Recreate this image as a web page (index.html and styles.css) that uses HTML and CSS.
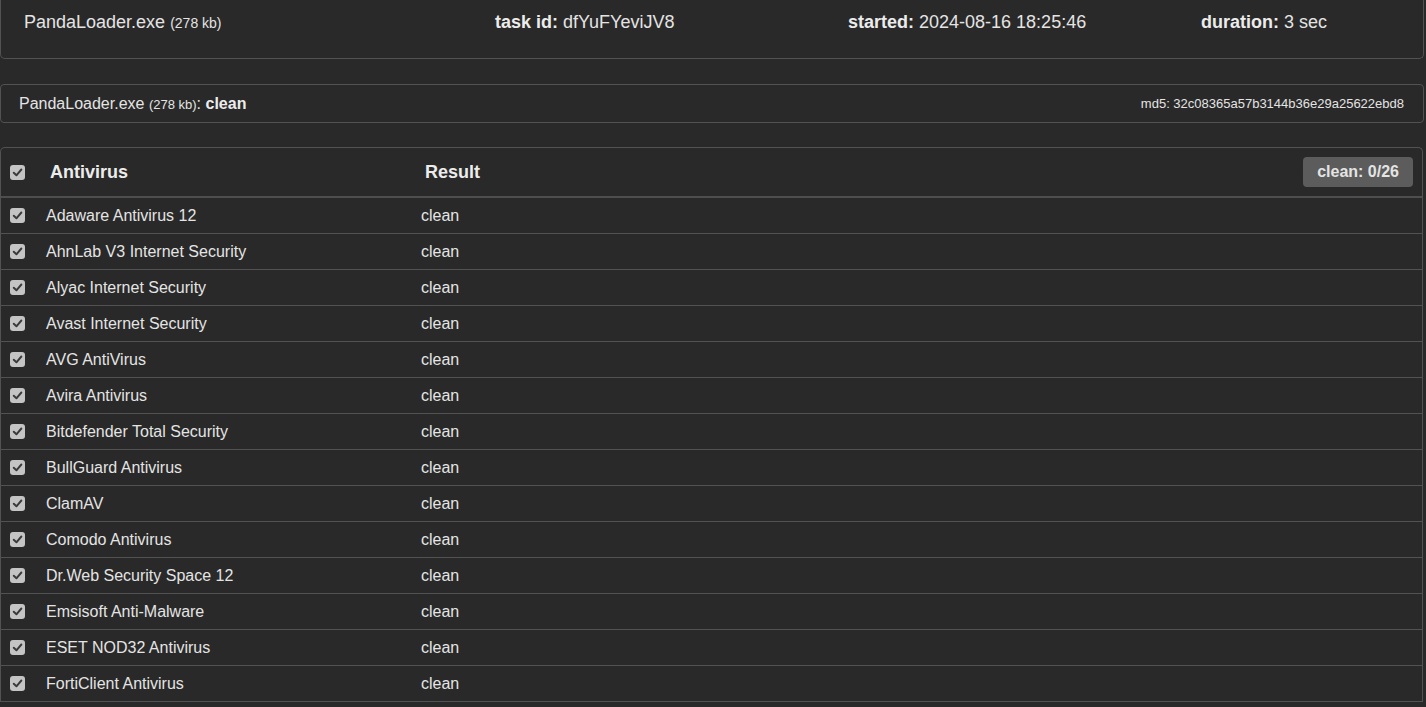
FILE: index.html
```html
<!DOCTYPE html>
<html>
<head>
<meta charset="utf-8">
<link rel="stylesheet" href="styles.css">
</head>
<body>
<div class="summary">
  <div class="cell file">PandaLoader.exe <span class="size">(278 kb)</span></div>
  <div class="cell"><b>task id:</b> dfYuFYeviJV8</div>
  <div class="cell"><b>started:</b> 2024-08-16 18:25:46</div>
  <div class="cell"><b>duration:</b> 3 sec</div>
</div>

<div class="filebar">
  <div class="fname">PandaLoader.exe <span class="size">(278 kb)</span>: <b>clean</b></div>
  <div class="md5">md5: 32c08365a57b3144b36e29a25622ebd8</div>
</div>

<div class="results">
  <div class="row head">
    <span class="cb"><svg viewBox="0 0 14 14"><path d="M3.5 7.2 L6 9.6 L10.6 4.2" fill="none" stroke="#3a3a3a" stroke-width="1.8" stroke-linecap="round" stroke-linejoin="round"/></svg></span>
    <span class="name">Antivirus</span>
    <span class="res">Result</span>
    <span class="badge">clean: 0/26</span>
  </div>
  <div class="row"><span class="cb"><svg viewBox="0 0 14 14"><path d="M3.5 7.2 L6 9.6 L10.6 4.2" fill="none" stroke="#3a3a3a" stroke-width="1.8" stroke-linecap="round" stroke-linejoin="round"/></svg></span><span class="name">Adaware Antivirus 12</span><span class="res">clean</span></div>
  <div class="row"><span class="cb"><svg viewBox="0 0 14 14"><path d="M3.5 7.2 L6 9.6 L10.6 4.2" fill="none" stroke="#3a3a3a" stroke-width="1.8" stroke-linecap="round" stroke-linejoin="round"/></svg></span><span class="name">AhnLab V3 Internet Security</span><span class="res">clean</span></div>
  <div class="row"><span class="cb"><svg viewBox="0 0 14 14"><path d="M3.5 7.2 L6 9.6 L10.6 4.2" fill="none" stroke="#3a3a3a" stroke-width="1.8" stroke-linecap="round" stroke-linejoin="round"/></svg></span><span class="name">Alyac Internet Security</span><span class="res">clean</span></div>
  <div class="row"><span class="cb"><svg viewBox="0 0 14 14"><path d="M3.5 7.2 L6 9.6 L10.6 4.2" fill="none" stroke="#3a3a3a" stroke-width="1.8" stroke-linecap="round" stroke-linejoin="round"/></svg></span><span class="name">Avast Internet Security</span><span class="res">clean</span></div>
  <div class="row"><span class="cb"><svg viewBox="0 0 14 14"><path d="M3.5 7.2 L6 9.6 L10.6 4.2" fill="none" stroke="#3a3a3a" stroke-width="1.8" stroke-linecap="round" stroke-linejoin="round"/></svg></span><span class="name">AVG AntiVirus</span><span class="res">clean</span></div>
  <div class="row"><span class="cb"><svg viewBox="0 0 14 14"><path d="M3.5 7.2 L6 9.6 L10.6 4.2" fill="none" stroke="#3a3a3a" stroke-width="1.8" stroke-linecap="round" stroke-linejoin="round"/></svg></span><span class="name">Avira Antivirus</span><span class="res">clean</span></div>
  <div class="row"><span class="cb"><svg viewBox="0 0 14 14"><path d="M3.5 7.2 L6 9.6 L10.6 4.2" fill="none" stroke="#3a3a3a" stroke-width="1.8" stroke-linecap="round" stroke-linejoin="round"/></svg></span><span class="name">Bitdefender Total Security</span><span class="res">clean</span></div>
  <div class="row"><span class="cb"><svg viewBox="0 0 14 14"><path d="M3.5 7.2 L6 9.6 L10.6 4.2" fill="none" stroke="#3a3a3a" stroke-width="1.8" stroke-linecap="round" stroke-linejoin="round"/></svg></span><span class="name">BullGuard Antivirus</span><span class="res">clean</span></div>
  <div class="row"><span class="cb"><svg viewBox="0 0 14 14"><path d="M3.5 7.2 L6 9.6 L10.6 4.2" fill="none" stroke="#3a3a3a" stroke-width="1.8" stroke-linecap="round" stroke-linejoin="round"/></svg></span><span class="name">ClamAV</span><span class="res">clean</span></div>
  <div class="row"><span class="cb"><svg viewBox="0 0 14 14"><path d="M3.5 7.2 L6 9.6 L10.6 4.2" fill="none" stroke="#3a3a3a" stroke-width="1.8" stroke-linecap="round" stroke-linejoin="round"/></svg></span><span class="name">Comodo Antivirus</span><span class="res">clean</span></div>
  <div class="row"><span class="cb"><svg viewBox="0 0 14 14"><path d="M3.5 7.2 L6 9.6 L10.6 4.2" fill="none" stroke="#3a3a3a" stroke-width="1.8" stroke-linecap="round" stroke-linejoin="round"/></svg></span><span class="name">Dr.Web Security Space 12</span><span class="res">clean</span></div>
  <div class="row"><span class="cb"><svg viewBox="0 0 14 14"><path d="M3.5 7.2 L6 9.6 L10.6 4.2" fill="none" stroke="#3a3a3a" stroke-width="1.8" stroke-linecap="round" stroke-linejoin="round"/></svg></span><span class="name">Emsisoft Anti-Malware</span><span class="res">clean</span></div>
  <div class="row"><span class="cb"><svg viewBox="0 0 14 14"><path d="M3.5 7.2 L6 9.6 L10.6 4.2" fill="none" stroke="#3a3a3a" stroke-width="1.8" stroke-linecap="round" stroke-linejoin="round"/></svg></span><span class="name">ESET NOD32 Antivirus</span><span class="res">clean</span></div>
  <div class="row"><span class="cb"><svg viewBox="0 0 14 14"><path d="M3.5 7.2 L6 9.6 L10.6 4.2" fill="none" stroke="#3a3a3a" stroke-width="1.8" stroke-linecap="round" stroke-linejoin="round"/></svg></span><span class="name">FortiClient Antivirus</span><span class="res">clean</span></div>
</div>
</body>
</html>
```

FILE: styles.css
```css
html, body {
  margin: 0;
  padding: 0;
  background: #292929;
  overflow: hidden;
}
body {
  font-family: "Liberation Sans", Arial, sans-serif;
  color: #e4e4e4;
  height: 707px;
}
b { font-weight: bold; color: #ececec; }

.summary {
  display: grid;
  grid-template-columns: 471px 353px 353px 1fr;
  height: 59px;
  box-sizing: border-box;
  margin-right: 2px;
  padding-left: 23px;
  border: 1px solid #525252;
  border-top: none;
  border-radius: 0 0 5px 5px;
  font-size: 18px;
}
.summary .cell {
  line-height: 18px;
  padding-top: 13px;
}
.size { font-size: 14px; }

.filebar {
  margin-top: 25px;
  margin-right: 2px;
  height: 39px;
  box-sizing: border-box;
  border: 1px solid #525252;
  border-radius: 4px;
  display: flex;
  align-items: center;
  justify-content: space-between;
  padding: 0 19px 0 18px;
}
.fname { font-size: 16px; }
.fname .size { font-size: 13px; }
.md5 { font-size: 13px; }

.results {
  margin-top: 24px;
  margin-right: 3px;
  border: 1px solid #525252;
  border-bottom: none;
  border-radius: 5px 5px 0 0;
}
.row {
  display: flex;
  align-items: center;
  height: 36px;
  border-bottom: 1px solid #525252;
  box-sizing: border-box;
  font-size: 16px;
  padding-left: 9px;
}
.row.head {
  height: 50px;
  border-bottom-width: 2px;
  border-bottom-color: #4e4e4e;
  font-size: 18px;
  font-weight: bold;
  color: #ececec;
}
.cb {
  width: 15px;
  height: 15px;
  border-radius: 3px;
  background: #c4c4c4;
  display: inline-flex;
  flex: none;
}
.cb svg { width: 15px; height: 15px; }
.row .name { margin-left: 21px; width: 375px; }
.row.head .name { margin-left: 25px; }
.row .res { flex: 1; }
.badge {
  background: #5c5c5c;
  color: #e4e4e4;
  border-radius: 4px;
  font-size: 16px;
  font-weight: bold;
  padding: 0 14px;
  height: 30px;
  line-height: 30px;
  margin-right: 9px;
}
```
